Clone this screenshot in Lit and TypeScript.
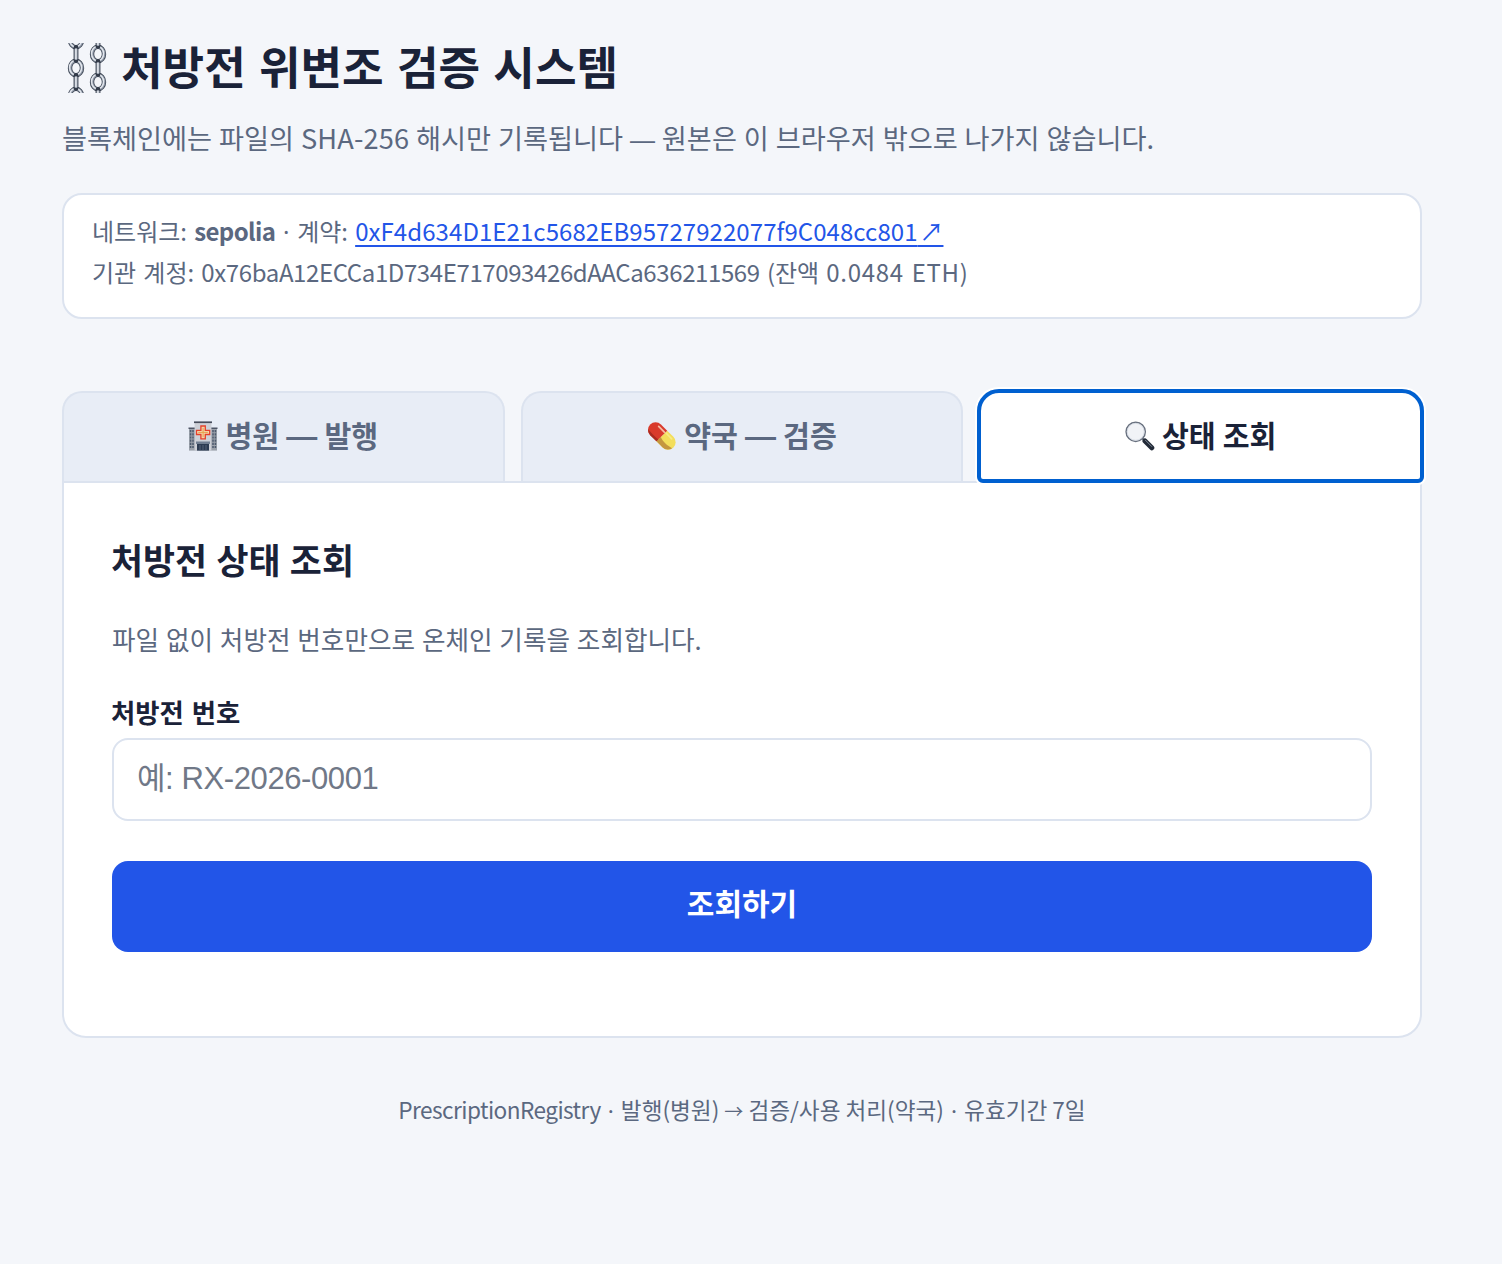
import { LitElement, html, css, svg } from "lit";
import { customElement, state } from "lit/decorators.js";
import { classMap } from "lit/directives/class-map.js";

// one chain link seen from the front, centred on cx/cy
const ring = (cx: number, cy: number) => svg`
  <ellipse cx=${cx} cy=${cy} rx="6" ry="7.2" fill="none" stroke="#3f4856" stroke-width="4.4" />
  <ellipse cx=${cx} cy=${cy} rx="6" ry="7.2" fill="none" stroke="#8f98a7" stroke-width="2.8" />
  <ellipse cx=${cx - 0.4} cy=${cy - 0.4} rx="6" ry="7.2" fill="none" stroke="#e4e8ee" stroke-width="1.4" />
`;

// the same link seen from the side
const bar = (cx: number, y: number, h: number) => svg`
  <rect x=${cx - 2.4} y=${y} width="4.8" height=${h} rx="2.4" fill="#333b49" />
  <rect x=${cx - 1.5} y=${y + 3} width="3" height=${h - 6} rx="1.5" fill="#aab2be" />
  <rect x=${cx - 0.7} y=${y + 4} width="1.2" height=${h - 8} fill="#eef1f5" />
`;

const chains = html`
  <svg class="chains" viewBox="0 0 42 50" aria-hidden="true">
    ${ring(10, -3)} ${ring(10, 25)} ${ring(10, 53)} ${bar(10, 2, 18)} ${bar(10, 30, 18)}
    ${ring(32, 11)} ${ring(32, 39)} ${bar(32, -12, 18)} ${bar(32, 16, 18)} ${bar(32, 44, 18)}
  </svg>
`;

const hospital = html`
  <svg class="emoji" viewBox="0 0 30 30" aria-hidden="true">
    <rect x="1" y="7" width="28" height="22.6" fill="#9ba1aa" />
    <path d="M0.5 6.5h7v1.6h-7zM22.5 6.5h7v1.6h-7z" fill="#4d5565" />
    <path d="M2.6 9v18M5 9v18M25 9v18M27.4 9v18" stroke="#4c5a6e" stroke-width="1.5" stroke-dasharray="2.2 1" />
    <rect x="6.6" y="1.4" width="16.8" height="28.2" fill="#cdd0d7" />
    <rect x="6" y="0.4" width="18" height="1.7" fill="#464d5c" />
    <rect x="8" y="20.5" width="14" height="2.4" fill="#717e92" />
    <rect x="9" y="22.9" width="12" height="6.7" fill="#2c3b52" />
    <path d="M12 24v5.6M15 24v5.6M18 24v5.6" stroke="#5f6d81" stroke-width="0.8" />
    <path d="M12.9 5h4.4v4.3h4.4v4.2h-4.4v4.4h-4.4v-4.4H8.5V9.3h4.4z" fill="#f3d7ad" stroke="#e5412b" stroke-width="1.3" />
    <path d="M15.1 6.8v9.4M10.3 11.4h9.6" stroke="#e8a04c" stroke-width="1" />
  </svg>
`;

const pill = html`
  <svg class="emoji" viewBox="0 0 30 30" aria-hidden="true">
    <g transform="translate(14.8 15) rotate(45)">
      <path d="M0 -7.6H8.8A7.6 7.6 0 0 1 8.8 7.6H0z" fill="#f3de5c" />
      <path d="M0 1.5C5 3.5 11 3 16 1.2A7.6 7.6 0 0 1 8.8 7.6H0z" fill="#c4963f" />
      <path d="M0 -7.6H-8.8A7.6 7.6 0 0 0 -8.8 7.6H0z" fill="#d93a2b" />
      <path d="M0 5C-5 5.5 -10 5 -14.5 5A7.6 7.6 0 0 0 -8.8 7.6H0z" fill="#a92b20" />
      <path d="M-9 -4.6H-1" stroke="#f6b9a2" stroke-width="1.8" stroke-linecap="round" />
      <path d="M1 -5H9" stroke="#f8eb85" stroke-width="1.6" stroke-linecap="round" />
    </g>
  </svg>
`;

const magnifier = html`
  <svg class="emoji" viewBox="0 0 30 30" aria-hidden="true">
    <path d="M17.5 17.5l3 3" stroke="#5d6673" stroke-width="2.4" />
    <path d="M20 20l6.8 6.8" stroke="#232b38" stroke-width="5" stroke-linecap="round" />
    <path d="M20.5 19.3l6.2 6.2" stroke="#7d8794" stroke-width="1" stroke-linecap="round" />
    <circle cx="10.7" cy="10.8" r="9.6" fill="#f1f3f7" stroke="#69717f" stroke-width="1.5" />
    <circle cx="10.7" cy="10.8" r="8.5" fill="none" stroke="#d5dae3" stroke-width="0.9" />
  </svg>
`;

const dash = html`<span class="dash">—</span>`;
const dot = html`<span class="dot">·</span>`;

const TABS = [
  { id: "issue", icon: hospital, label: html`병원 ${dash} 발행` },
  { id: "verify", icon: pill, label: html`약국 ${dash} 검증` },
  { id: "status", icon: magnifier, label: html`상태 조회` },
];

@customElement("app-root")
export class AppRoot extends LitElement {
  static styles = css`
    :host {
      display: block;
      box-sizing: border-box;
      min-height: 1264px;
      padding: 36px 80px 60px 62px;
      background: #f4f6fa;
      color: #1a2238;
      font-family: "Noto Sans CJK KR", sans-serif;
    }
    * {
      box-sizing: border-box;
    }
    h1,
    h2,
    p {
      margin: 0;
    }
    h1 {
      display: flex;
      align-items: center;
      height: 60px;
      font-size: 45.2px;
      line-height: 60px;
      word-spacing: 3px;
      white-space: nowrap;
    }
    .chains {
      width: 42px;
      height: 50px;
      margin: 3px 13px 0 4px;
    }
    .subtitle {
      margin-top: 21px;
      color: #5b6880;
      font-size: 27.2px;
      line-height: 40px;
      word-spacing: 0.8px;
      white-space: nowrap;
    }
    .sha {
      letter-spacing: 0.15px;
    }
    .dash {
      font-family: "Liberation Sans", sans-serif;
      line-height: 1;
    }
    .subtitle .dash {
      font-size: 25px;
    }
    .tab .dash {
      font-size: 31px;
    }
    .dot {
      font-family: "Noto Sans", sans-serif;
      line-height: 1;
    }
    .network {
      height: 126px;
      margin-top: 36px;
      padding: 15px 28px;
      border: 2px solid #dce3ef;
      border-radius: 20px;
      background: #fff;
      color: #5b6880;
      font-size: 24px;
      line-height: 41px;
      word-spacing: 1.8px;
      white-space: nowrap;
    }
    .network b {
      letter-spacing: -0.6px;
    }
    .network a {
      color: #2255e8;
      text-decoration: underline;
      text-decoration-thickness: 2px;
      text-underline-offset: 4px;
      text-decoration-skip-ink: none;
      word-spacing: -3.5px;
    }
    .contract {
      letter-spacing: 0.07px;
    }
    .account {
      letter-spacing: -0.39px;
    }
    .balance {
      letter-spacing: 0.7px;
    }
    .tabs {
      display: grid;
      grid-template-columns: repeat(3, 1fr);
      gap: 16px;
      margin-top: 72px;
    }
    .tab {
      position: relative;
      display: flex;
      align-items: center;
      justify-content: center;
      height: 90px;
      padding: 0;
      border: 2px solid #dce3ef;
      border-bottom: 0;
      border-radius: 20px 20px 0 0;
      background: #e8edf6;
      color: #5b6880;
      font: bold 29.2px/40px "Noto Sans CJK KR", sans-serif;
      word-spacing: 0.5px;
      white-space: nowrap;
      cursor: pointer;
    }
    .label {
      margin-bottom: 6px;
    }
    .tab.active {
      background: #fff;
      color: #1a2238;
      outline: none;
    }
    /* focus ring straddles the tab edge and the panel border */
    .tab.active::after {
      content: "";
      position: absolute;
      inset: -4px -4px -2px;
      z-index: 1;
      border: 4px solid #0060d0;
      border-radius: 22px 22px 6px 6px;
      box-shadow: 0 0 0 2px #fff;
    }
    .emoji {
      width: 30px;
      height: 30px;
      margin: 0 7px 2px 0;
    }
    .panel {
      height: 557px;
      padding: 48px;
      border: 2px solid #dce3ef;
      border-radius: 0 0 24px 24px;
      background: #fff;
    }
    h2 {
      margin-left: -1px;
      font-size: 34.8px;
      line-height: 56px;
      word-spacing: 1.5px;
    }
    .hint {
      margin-top: 32px;
      color: #5b6880;
      font-size: 25.6px;
      line-height: 40px;
      word-spacing: 1.1px;
    }
    label {
      display: block;
      margin: 34px 0 0 -1px;
      font-size: 26.4px;
      font-weight: bold;
      line-height: 38px;
      word-spacing: 2px;
    }
    input {
      display: block;
      width: 100%;
      height: 83px;
      margin-top: 7px;
      padding: 0 23px 1px;
      border: 2px solid #dce3ef;
      border-radius: 16px;
      background: #fff;
      font: 31px "Liberation Sans", "Noto Sans CJK KR", sans-serif;
      letter-spacing: -0.4px;
    }
    input::placeholder {
      color: #707887;
    }
    .submit {
      display: block;
      width: 100%;
      height: 91px;
      margin-top: 40px;
      padding: 0 0 10px;
      border: 0;
      border-radius: 16px;
      background: #2255e8;
      color: #fff;
      font: bold 30px/40px "Noto Sans CJK KR", sans-serif;
    }
    footer {
      margin-top: 52px;
      color: #5b6880;
      font-size: 22.6px;
      line-height: 40px;
      text-align: center;
    }
    .name {
      letter-spacing: -0.55px;
    }
    .dot {
      margin: 0 0.5px;
    }
    footer .dot {
      margin: 0 2px;
    }
    .arrow {
      font-size: 19px;
      line-height: 1;
    }
  `;

  @state() private active = "status";

  render() {
    return html`
      <h1>${chains}<span>처방전 위변조 검증 시스템</span></h1>
      <p class="subtitle">
        블록체인에는 파일의 <span class="sha">SHA-256</span> 해시만 기록됩니다 ${dash} 원본은 이 브라우저 밖으로 나가지 않습니다.
      </p>

      <div class="network">
        <div>
          네트워크: <b>sepolia</b> ${dot} 계약:
          <a href="#"><span class="contract">0xF4d634D1E21c5682EB95727922077f9C048cc801</span> ↗</a>
        </div>
        <div>
          기관 계정: <span class="account">0x76baA12ECCa1D734E717093426dAACa636211569</span>
          (잔액 <span class="balance">0.0484 ETH)</span>
        </div>
      </div>

      <div class="tabs" role="tablist">
        ${TABS.map(
          (tab) => html`
            <button
              role="tab"
              class=${classMap({ tab: true, active: tab.id === this.active })}
              @click=${() => (this.active = tab.id)}
            >
              ${tab.icon}<span class="label">${tab.label}</span>
            </button>
          `
        )}
      </div>

      <section class="panel">
        <h2>처방전 상태 조회</h2>
        <p class="hint">파일 없이 처방전 번호만으로 온체인 기록을 조회합니다.</p>
        <label for="rx">처방전 번호</label>
        <input id="rx" placeholder="예: RX-2026-0001" />
        <button class="submit">조회하기</button>
      </section>

      <footer>
        <span class="name">PrescriptionRegistry</span> ${dot} 발행(병원) <span class="arrow">→</span> 검증/사용
        처리(약국) ${dot} 유효기간 7일
      </footer>
    `;
  }
}
